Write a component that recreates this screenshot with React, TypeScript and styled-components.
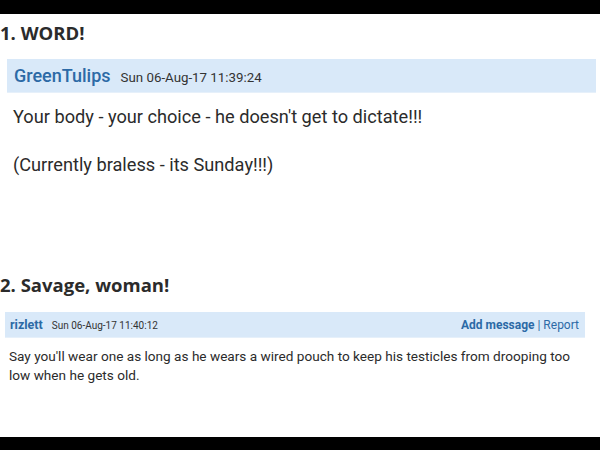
import React from "react";
import styled, { createGlobalStyle } from "styled-components";

interface Post {
  title: string;
  user: string;
  date: string;
  lines: string[];
  size: "large" | "small";
  actions?: boolean;
}

const posts: Post[] = [
  {
    title: "1. WORD!",
    user: "GreenTulips",
    date: "Sun 06-Aug-17 11:39:24",
    lines: [
      "Your body - your choice - he doesn't get to dictate!!!",
      "(Currently braless - its Sunday!!!)",
    ],
    size: "large",
  },
  {
    title: "2. Savage, woman!",
    user: "rizlett",
    date: "Sun 06-Aug-17 11:40:12",
    lines: [
      "Say you'll wear one as long as he wears a wired pouch to keep his testicles from drooping too low when he gets old.",
    ],
    size: "small",
    actions: true,
  },
];

export default function App() {
  return (
    <>
      <GlobalStyle />
      <Page>
        <Band />
        <Content>
          {posts.map((post) => (
            <Section key={post.title} $size={post.size}>
              <Heading>{post.title}</Heading>
              <Card $size={post.size}>
                <MetaBar $size={post.size}>
                  <User $size={post.size}>{post.user}</User>
                  <Stamp $size={post.size}>{post.date}</Stamp>
                  {post.actions && (
                    <Actions>
                      <strong>Add message</strong> | Report
                    </Actions>
                  )}
                </MetaBar>
                <Body $size={post.size}>
                  {post.lines.map((line) => (
                    <p key={line}>{line}</p>
                  ))}
                </Body>
              </Card>
            </Section>
          ))}
        </Content>
        <Band $bottom />
      </Page>
    </>
  );
}

//******** STYLES ********//
const GlobalStyle = createGlobalStyle`
  html, body {
    margin: 0;
    padding: 0;
    background: #fff;
  }
  * {
    box-sizing: border-box;
  }
`;

const Page = styled.div`
  width: 600px;
  height: 450px;
  display: flex;
  flex-direction: column;
  overflow: hidden;
  background: #fff;
`;

const Band = styled.div<{ $bottom?: boolean }>`
  height: ${(p) => (p.$bottom ? "13px" : "14px")};
  flex-shrink: 0;
  background: #000;
`;

const Content = styled.div`
  flex: 1;
  display: flex;
  flex-direction: column;
`;

const Section = styled.section<{ $size: "large" | "small" }>`
  padding-top: ${(p) => (p.$size === "large" ? "6px" : "0")};
  height: ${(p) => (p.$size === "large" ? "258px" : "auto")};
`;

const Heading = styled.h2`
  margin: 0;
  font-family: "Open Sans", "Liberation Sans", sans-serif;
  font-weight: 700;
  font-size: 18.5px;
  line-height: 26px;
  color: #2b2b2b;
`;

const Card = styled.div<{ $size: "large" | "small" }>`
  margin-top: ${(p) => (p.$size === "large" ? "13px" : "14px")};
  margin-left: ${(p) => (p.$size === "large" ? "7px" : "5px")};
  width: ${(p) => (p.$size === "large" ? "589px" : "580px")};
`;

const MetaBar = styled.div<{ $size: "large" | "small" }>`
  display: flex;
  align-items: baseline;
  gap: ${(p) => (p.$size === "large" ? "10px" : "9px")};
  height: ${(p) => (p.$size === "large" ? "34px" : "26px")};
  padding: ${(p) => (p.$size === "large" ? "6px 7px 0" : "5px 6px 0 5px")};
  background: #d9e9f9;
  border-bottom: 1px solid #e6f0fa;
  font-family: Roboto, "Liberation Sans", sans-serif;
`;

const User = styled.span<{ $size: "large" | "small" }>`
  color: #2c6aa6;
  font-size: ${(p) => (p.$size === "large" ? "18px" : "12.5px")};
  font-weight: ${(p) => (p.$size === "large" ? 500 : 700)};
`;

const Stamp = styled.span<{ $size: "large" | "small" }>`
  color: #333;
  font-size: ${(p) => (p.$size === "large" ? "13.3px" : "10px")};
`;

const Actions = styled.span`
  margin-left: auto;
  color: #2c6aa6;
  font-size: 12px;

  strong {
    font-weight: 700;
  }
`;

const Body = styled.div<{ $size: "large" | "small" }>`
  padding: ${(p) => (p.$size === "large" ? "13px 6px 0" : "9px 4px 0")};
  font-family: Roboto, "Liberation Sans", sans-serif;
  color: #2b2b2b;
  font-size: ${(p) => (p.$size === "large" ? "18.2px" : "13.6px")};
  line-height: ${(p) => (p.$size === "large" ? "22px" : "19px")};

  p {
    margin: 0 0 ${(p) => (p.$size === "large" ? "26px" : "0")};
  }
`;
